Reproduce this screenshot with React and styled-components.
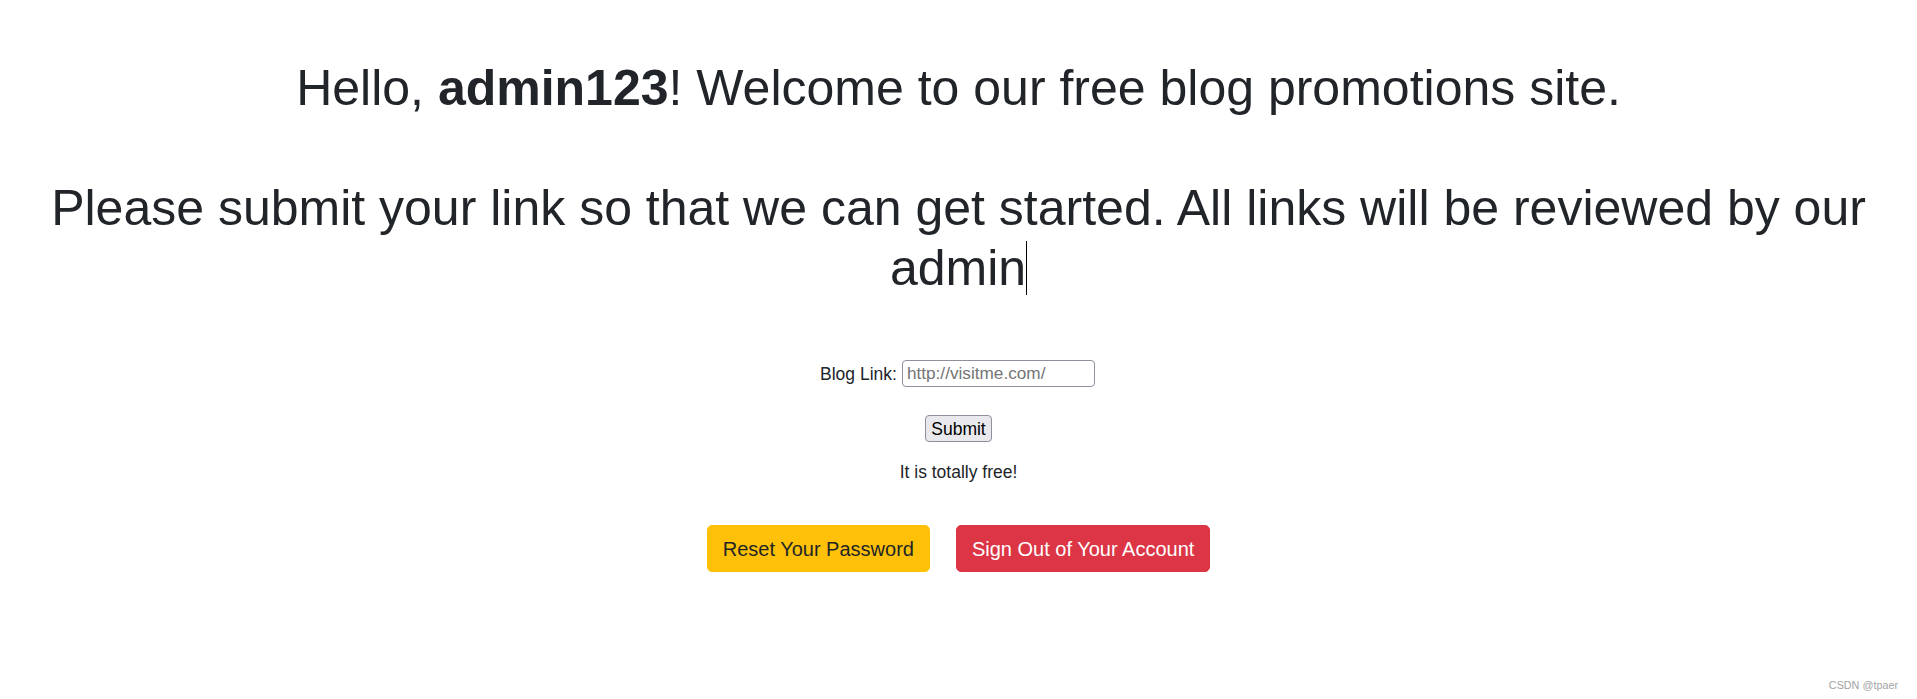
import React from 'react';
import styled, { createGlobalStyle } from 'styled-components';

const GlobalStyle = createGlobalStyle`
  html, body {
    margin: 0;
    padding: 0;
    background: #fff;
  }
  body {
    font-family: "Liberation Sans", Arial, sans-serif;
    color: #212529;
  }
`;

const Page = styled.div`
  padding-top: 58px;
  text-align: center;
  min-height: 641px;
`;

const Heading = styled.h1`
  margin: 0 0 10px;
  font-size: 50px;
  font-weight: 500;
  line-height: 60px;
  color: #212529;
`;

const Caret = styled.span`
  display: inline-block;
  width: 1px;
  height: 54px;
  background: #000;
  vertical-align: -10px;
`;

const Form = styled.form`
  margin: 62px 0 0;
  display: flex;
  flex-direction: column;
  align-items: center;
`;

const FieldRow = styled.div`
  display: flex;
  justify-content: center;
  align-items: center;
  gap: 5px;
  font-size: 17.5px;
  margin-left: -2px;
`;

const Label = styled.label`
  line-height: 20px;
`;

const LinkInput = styled.input`
  box-sizing: border-box;
  width: 193px;
  height: 27px;
  padding: 0 4px;
  border: 1px solid #8f8f9d;
  border-radius: 4px;
  font-family: "Liberation Sans", Arial, sans-serif;
  font-size: 17.2px;
  color: #000;
  background: #fff;
  outline: none;

  &::placeholder {
    color: #757575;
  }
`;

const SubmitButton = styled.button`
  box-sizing: border-box;
  margin-top: 28px;
  height: 27px;
  padding: 2.5px 5.5px;
  border: 1px solid #8f8f9d;
  border-radius: 4px;
  background: #e9e9ed;
  color: #000;
  font-family: "Liberation Sans", Arial, sans-serif;
  font-size: 17.5px;
  line-height: 20px;
`;

const Note = styled.div`
  margin-top: 20px;
  font-size: 17.5px;
  line-height: 20px;
`;

const Actions = styled.div`
  margin-top: 43px;
  display: flex;
  justify-content: center;
  gap: 26px;
`;

const ActionButton = styled.button`
  box-sizing: border-box;
  padding: 7.5px 15px;
  border: 1px solid ${p => (p.$variant === 'danger' ? '#dc3545' : '#ffc107')};
  border-radius: 5px;
  background: ${p => (p.$variant === 'danger' ? '#dc3545' : '#ffc107')};
  color: ${p => (p.$variant === 'danger' ? '#fff' : '#212529')};
  font-family: "Liberation Sans", Arial, sans-serif;
  font-size: 20px;
  font-weight: 400;
  line-height: 30px;
  cursor: pointer;
`;

const Watermark = styled.div`
  position: absolute;
  right: 19px;
  bottom: 8px;
  font-family: "Liberation Sans", Arial, sans-serif;
  font-size: 10.8px;
  color: #a3a3a3;
`;

export default function App() {
  return (
    <>
      <GlobalStyle />
      <Page>
        <Heading>
          Hello, <b>admin123</b>! Welcome to our free blog promotions site.
          <br />
          <br />
          Please submit your link so that we can get started. All links will be reviewed by our admin
          <Caret />
        </Heading>

        <Form onSubmit={e => e.preventDefault()}>
          <FieldRow>
            <Label htmlFor="blog-link">Blog Link:</Label>
            <LinkInput id="blog-link" type="text" placeholder="http://visitme.com/" />
          </FieldRow>
          <SubmitButton type="submit">Submit</SubmitButton>
        </Form>

        <Note>It is totally free!</Note>

        <Actions>
          <ActionButton $variant="warning">Reset Your Password</ActionButton>
          <ActionButton $variant="danger">Sign Out of Your Account</ActionButton>
        </Actions>
      </Page>
      <Watermark>CSDN @tpaer</Watermark>
    </>
  );
}
